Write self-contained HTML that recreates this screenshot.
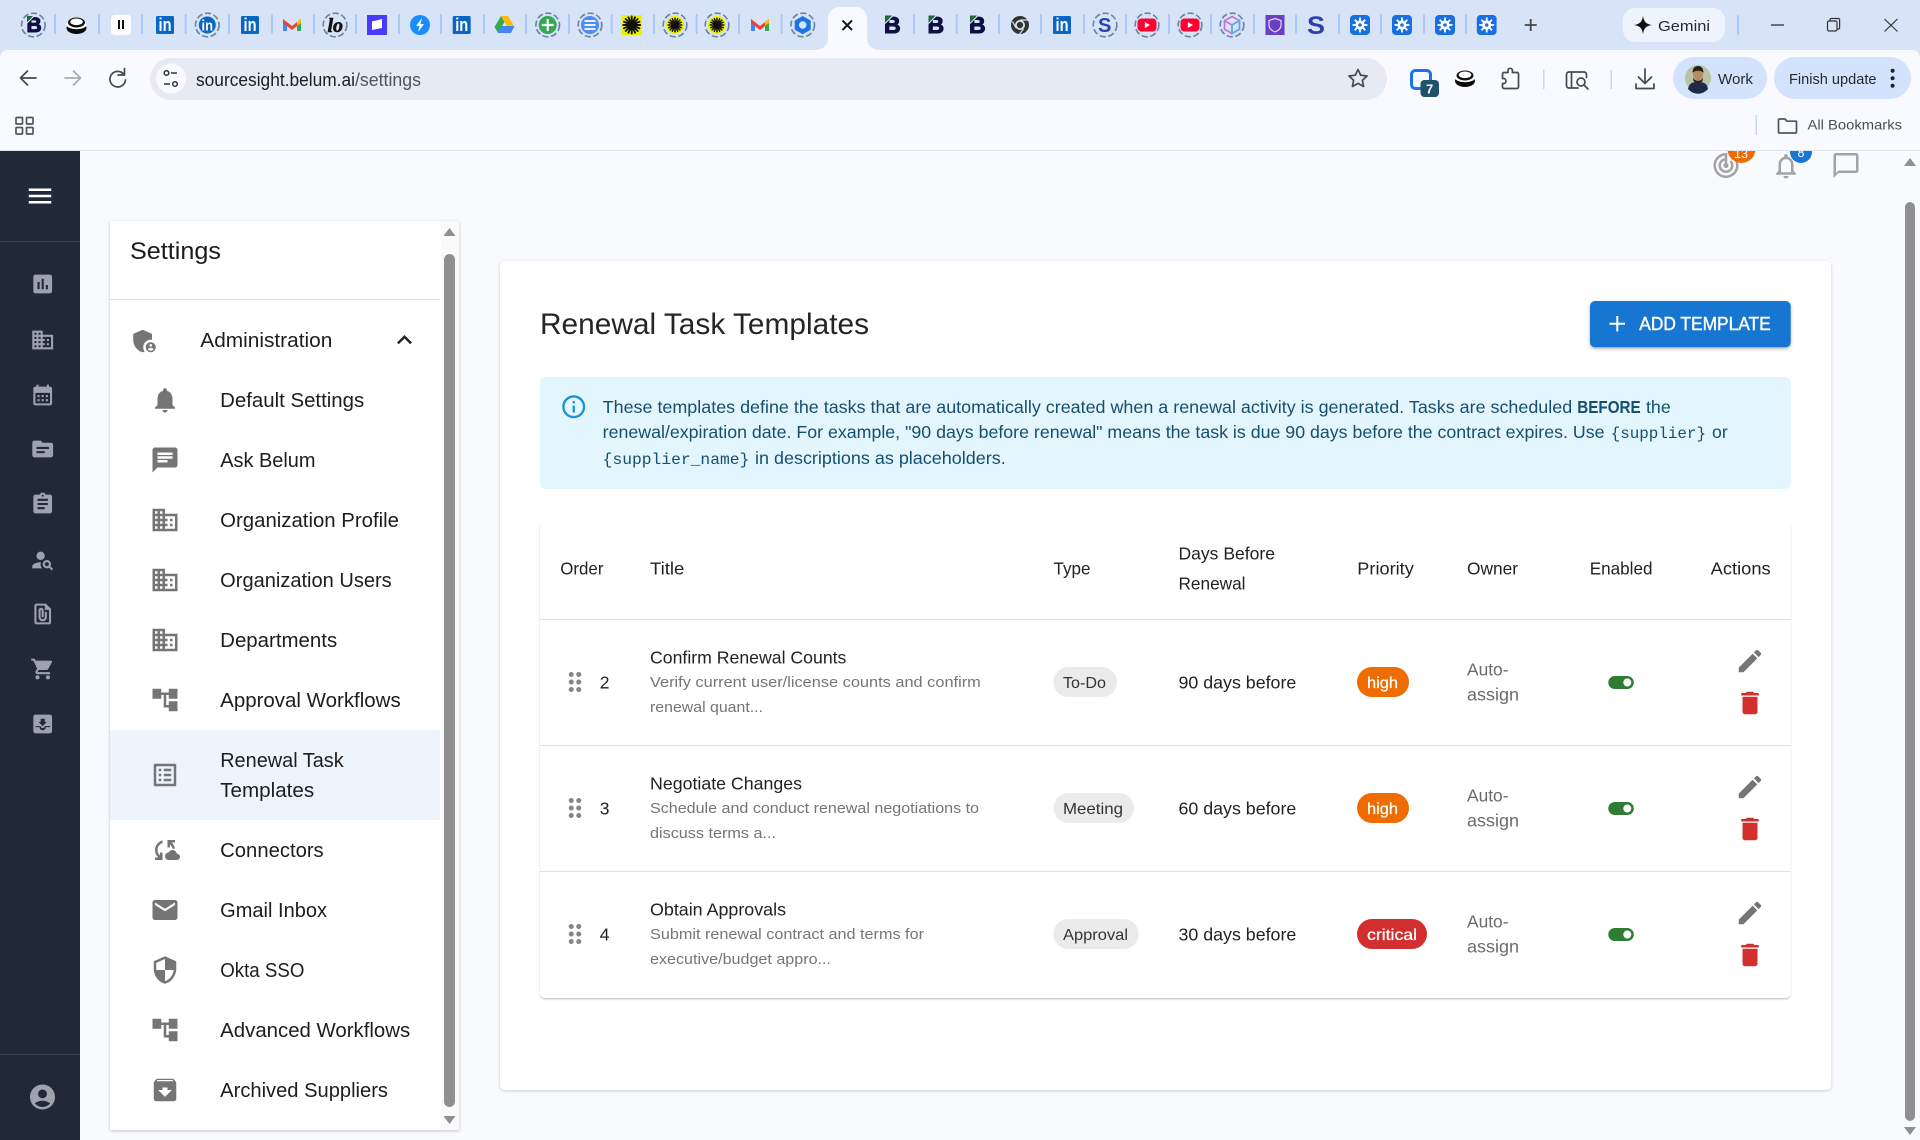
<!DOCTYPE html>
<html lang="en">
<head>
<meta charset="utf-8">
<title>Renewal Task Templates - Settings</title>
<style>
html,body{margin:0;padding:0;width:1920px;height:1140px;overflow:hidden;background:#f9fafe}
svg{display:block}
text{font-family:"Liberation Sans",sans-serif;white-space:pre}
.n{font-size:20px;fill:#1d1d1d}
.th{font-size:17.5px;fill:#222}
.td{font-size:17.5px;fill:#222}
.ds{font-size:15px;fill:#757575}
.ow{font-size:17.5px;fill:#6b6b6b}
.ch{font-size:16px;fill:#333}
.pr{font-size:16px;fill:#fff;stroke:#fff;stroke-width:.25}
.al{font-size:17.5px;fill:#164f6e}
.mo{font-family:"Liberation Mono",monospace;font-size:16px;fill:#164f6e}
.ui{font-size:15px;fill:#26292f}
.ic{fill:#757575}
.si{fill:#9ca3af}
.ln{fill:none;stroke:#444a52;stroke-width:1.7;stroke-linecap:round;stroke-linejoin:round}
.sep{fill:#a8c7fa}
.fb{font-weight:700;font-size:23px;fill:#0e1044;stroke:#0e1044;stroke-width:1.1}
.fi{font-weight:700;font-size:18px;fill:#fff}
</style>
</head>
<body>
<svg xmlns="http://www.w3.org/2000/svg" width="1920" height="1140" viewBox="0 0 1920 1140">
<defs>
<symbol id="menu" viewBox="0 0 24 24"><path d="M3 18h18v-2H3v2zm0-5h18v-2H3v2zm0-7v2h18V6H3z"/></symbol>
<symbol id="assess" viewBox="0 0 24 24"><path d="M19 3H5c-1.1 0-2 .9-2 2v14c0 1.1.9 2 2 2h14c1.1 0 2-.9 2-2V5c0-1.1-.9-2-2-2zM9 17H7v-7h2v7zm4 0h-2V7h2v10zm4 0h-2v-4h2v4z"/></symbol>
<symbol id="domain" viewBox="0 0 24 24"><path d="M12 7V3H2v18h20V7H12zM6 19H4v-2h2v2zm0-4H4v-2h2v2zm0-4H4V9h2v2zm0-4H4V5h2v2zm4 12H8v-2h2v2zm0-4H8v-2h2v2zm0-4H8V9h2v2zm0-4H8V5h2v2zm10 12h-8v-2h2v-2h-2v-2h2v-2h-2V9h8v10zm-2-8h-2v2h2v-2zm0 4h-2v2h2v-2z"/></symbol>
<symbol id="cal" viewBox="0 0 24 24"><path d="M19 4h-1V2h-2v2H8V2H6v2H5c-1.11 0-1.99.9-1.99 2L3 20c0 1.1.89 2 2 2h14c1.1 0 2-.9 2-2V6c0-1.1-.9-2-2-2zm0 16H5V10h14v10zM9 14H7v-2h2v2zm4 0h-2v-2h2v2zm4 0h-2v-2h2v2zm-8 4H7v-2h2v2zm4 0h-2v-2h2v2zm4 0h-2v-2h2v2z"/></symbol>
<symbol id="topic" viewBox="0 0 24 24"><path d="M20 6h-8l-2-2H4c-1.1 0-1.99.9-1.99 2L2 18c0 1.1.9 2 2 2h16c1.1 0 2-.9 2-2V8c0-1.1-.9-2-2-2zm-6 10H6v-2h8v2zm4-4H6v-2h12v2z"/></symbol>
<symbol id="assign" viewBox="0 0 24 24"><path d="M19 3h-4.18C14.4 1.84 13.3 1 12 1c-1.3 0-2.4.84-2.82 2H5c-1.1 0-2 .9-2 2v14c0 1.1.9 2 2 2h14c1.1 0 2-.9 2-2V5c0-1.1-.9-2-2-2zm-7 0c.55 0 1 .45 1 1s-.45 1-1 1-1-.45-1-1 .45-1 1-1zm2 14H7v-2h7v2zm3-4H7v-2h10v2zm0-4H7V7h10v2z"/></symbol>
<symbol id="psearch" viewBox="0 0 24 24"><circle cx="10" cy="8" r="4"/><path d="M10.35 14.01C7.62 13.91 2 15.27 2 18v2h9.54c-2.47-2.76-1.23-5.89-1.19-5.99zm9.08 4.01c.36-.59.57-1.28.57-2.02 0-2.21-1.79-4-4-4s-4 1.79-4 4 1.79 4 4 4c.74 0 1.43-.22 2.02-.57L20.59 22 22 20.59l-2.57-2.57zM16 18c-1.1 0-2-.9-2-2s.9-2 2-2 2 .9 2 2-.9 2-2 2z"/></symbol>
<symbol id="file" viewBox="0 0 24 24"><path d="M15 2H6c-1.1 0-2 .9-2 2v16c0 1.1.9 2 2 2h12c1.1 0 2-.89 2-2V7l-5-5zM6 20V4h8v4h4v12H6zm10-10v5c0 2.21-1.79 4-4 4s-4-1.79-4-4V8.5c0-1.47 1.26-2.64 2.76-2.49C12.06 6.14 13 7.35 13 8.66V15h-2V8.5c0-.28-.22-.5-.5-.5s-.5.22-.5.5V15c0 1.1.9 2 2 2s2-.9 2-2v-5h2z"/></symbol>
<symbol id="cart" viewBox="0 0 24 24"><path d="M7 18c-1.1 0-1.99.9-1.99 2S5.9 22 7 22s2-.9 2-2-.9-2-2-2zM1 2v2h2l3.6 7.59-1.35 2.45c-.16.28-.25.61-.25.96 0 1.1.9 2 2 2h12v-2H7.42c-.14 0-.25-.11-.25-.25l.03-.12.9-1.63h7.45c.75 0 1.41-.41 1.75-1.03l3.58-6.49c.08-.14.12-.31.12-.48 0-.55-.45-1-1-1H5.21l-.94-2H1zm16 16c-1.1 0-1.99.9-1.99 2s.89 2 1.99 2 2-.9 2-2-.9-2-2-2z"/></symbol>
<symbol id="inbox" viewBox="0 0 24 24"><path fill-rule="evenodd" d="M19 3H5c-1.1 0-2 .9-2 2v14c0 1.1.9 2 2 2h14c1.1 0 2-.9 2-2V5c0-1.1-.9-2-2-2zM16 10h-2V7h-4v3H8l4 4 4-4zM5 14v1h4c0 1.66 1.35 3 3 3s3-1.34 3-3h4v-1h-5c0 1.1-.9 2-2 2s-2-.9-2-2H5z"/></symbol>
<symbol id="acct" viewBox="0 0 24 24"><path d="M12 2C6.48 2 2 6.48 2 12s4.48 10 10 10 10-4.48 10-10S17.52 2 12 2zm0 4c1.93 0 3.5 1.57 3.5 3.5S13.93 13 12 13s-3.5-1.57-3.5-3.5S10.07 6 12 6zm0 14c-2.03 0-4.43-.82-6.14-2.88C7.55 15.8 9.68 15 12 15s4.45.8 6.14 2.12C16.43 19.18 14.03 20 12 20z"/></symbol>
<symbol id="bell" viewBox="0 0 24 24"><path d="M12 22c1.1 0 2-.9 2-2h-4c0 1.1.89 2 2 2zm6-6v-5c0-3.07-1.64-5.64-4.5-6.32V4c0-.83-.67-1.5-1.5-1.5s-1.5.67-1.5 1.5v.68C7.63 5.36 6 7.92 6 11v5l-2 2v1h16v-1l-2-2z"/></symbol>
<symbol id="chat" viewBox="0 0 24 24"><path d="M20 2H4c-1.1 0-1.99.9-1.99 2L2 22l4-4h14c1.1 0 2-.9 2-2V4c0-1.1-.9-2-2-2zM6 9h12v2H6V9zm8 5H6v-2h8v2zm4-6H6V6h12v2z"/></symbol>
<symbol id="tree" viewBox="0 0 24 24"><path d="M22 11V3h-7v3H9V3H2v8h7V8h2v10h4v3h7v-8h-7v3h-2V8h2v3z"/></symbol>
<symbol id="list" viewBox="0 0 24 24"><path d="M19 5v14H5V5h14m1.1-2H3.9c-.5 0-.9.4-.9.9v16.2c0 .4.4.9.9.9h16.2c.4 0 .9-.5.9-.9V3.9c0-.5-.5-.9-.9-.9zM11 7h6v2h-6V7zm0 4h6v2h-6v-2zm0 4h6v2h-6zM7 7h2v2H7zm0 4h2v2H7zm0 4h2v2H7z"/></symbol>
<symbol id="mail" viewBox="0 0 24 24"><path d="M20 4H4c-1.1 0-1.99.9-1.99 2L2 18c0 1.1.9 2 2 2h16c1.1 0 2-.9 2-2V6c0-1.1-.9-2-2-2zm0 4l-8 5-8-5V6l8 5 8-5v2z"/></symbol>
<symbol id="sec" viewBox="0 0 24 24"><path d="M12 1L3 5v6c0 5.55 3.84 10.74 9 12 5.16-1.26 9-6.45 9-12V5l-9-4zm0 10.99h7c-.53 4.12-3.28 7.79-7 8.94V12H5V6.3l7-3.11v8.8z"/></symbol>
<symbol id="arch" viewBox="0 0 24 24"><path d="M20.54 5.23l-1.39-1.68C18.88 3.21 18.47 3 18 3H6c-.47 0-.88.21-1.16.55L3.46 5.23C3.17 5.57 3 6.02 3 6.5V19c0 1.1.9 2 2 2h14c1.1 0 2-.9 2-2V6.5c0-.48-.17-.93-.46-1.27zM12 17.5L6.5 12H10v-2h4v2h3.5L12 17.5zM5.12 5l.81-1h12l.94 1H5.12z"/></symbol>
<symbol id="csync" viewBox="0 0 24 24"><path d="M21.5 14.98c-.02 0-.03 0-.05.01C21.2 13.3 19.76 12 18 12c-1.4 0-2.6.83-3.16 2.02C13.26 14.1 12 15.4 12 17c0 1.66 1.34 3 3 3l6.5-.02c1.38 0 2.5-1.12 2.5-2.5s-1.12-2.5-2.5-2.5zM10 4.26v2.09C7.67 7.18 6 9.39 6 12c0 1.77.78 3.34 2 4.44V14h2v6H4v-2h2.73C5.06 16.54 4 14.4 4 12c0-3.73 2.55-6.85 6-7.74zM20 6h-2.73c1.43 1.26 2.41 3.01 2.66 5h-2.02c-.23-1.36-.93-2.55-1.91-3.44V10h-2V4h6v2z"/></symbol>
<symbol id="admin" viewBox="0 0 24 24"><path d="M17 11c.34 0 .67.04 1 .09V6.27L10.5 3 3 6.27v4.91c0 4.54 3.2 8.79 7.5 9.82.55-.13 1.08-.32 1.6-.55-.69-.98-1.1-2.17-1.1-3.45 0-3.31 2.69-6 6-6zM17 13c-2.21 0-4 1.79-4 4s1.79 4 4 4 4-1.79 4-4-1.79-4-4-4zm0 1.38c.62 0 1.12.51 1.12 1.12s-.51 1.12-1.12 1.12-1.12-.51-1.12-1.12.5-1.12 1.12-1.12zm0 5.37c-.93 0-1.74-.46-2.24-1.17.05-.72 1.51-1.08 2.24-1.08s2.19.36 2.24 1.08c-.5.71-1.31 1.17-2.24 1.17z"/></symbol>
<symbol id="less" viewBox="0 0 24 24"><path d="M12 8l-6 6 1.41 1.41L12 10.83l4.59 4.58L18 14z"/></symbol>
<symbol id="edit" viewBox="0 0 24 24"><path d="M3 17.25V21h3.75L17.81 9.94l-3.75-3.75L3 17.25zM20.71 7.04c.39-.39.39-1.02 0-1.41l-2.34-2.34c-.39-.39-1.02-.39-1.41 0l-1.83 1.83 3.75 3.75 1.83-1.83z"/></symbol>
<symbol id="del" viewBox="0 0 24 24"><path d="M6 19c0 1.1.9 2 2 2h8c1.1 0 2-.9 2-2V7H6v12zM19 4h-3.5l-1-1h-5l-1 1H5v2h14V4z"/></symbol>
<symbol id="drag" viewBox="0 0 24 24"><path d="M11 18c0 1.1-.9 2-2 2s-2-.9-2-2 .9-2 2-2 2 .9 2 2zm-2-8c-1.1 0-2 .9-2 2s.9 2 2 2 2-.9 2-2-.9-2-2-2zm0-6c-1.1 0-2 .9-2 2s.9 2 2 2 2-.9 2-2-.9-2-2-2zm6 4c1.1 0 2-.9 2-2s-.9-2-2-2-2 .9-2 2 .9 2 2 2zm0 2c-1.1 0-2 .9-2 2s.9 2 2 2 2-.9 2-2-.9-2-2-2zm0 6c-1.1 0-2 .9-2 2s.9 2 2 2 2-.9 2-2-.9-2-2-2z"/></symbol>
<symbol id="info" viewBox="0 0 24 24"><path d="M11 7h2v2h-2zm0 4h2v6h-2zm1-9C6.48 2 2 6.48 2 12s4.48 10 10 10 10-4.48 10-10S17.52 2 12 2zm0 18c-4.41 0-8-3.59-8-8s3.59-8 8-8 8 3.59 8 8-3.59 8-8 8z"/></symbol>
<symbol id="nbell" viewBox="0 0 24 24"><path d="M12 22c1.1 0 2-.9 2-2h-4c0 1.1.9 2 2 2zm6-6v-5c0-3.07-1.63-5.64-4.5-6.32V4c0-.83-.67-1.5-1.5-1.5s-1.5.67-1.5 1.5v.68C7.64 5.36 6 7.92 6 11v5l-2 2v1h16v-1l-2-2zm-2 1H8v-6c0-2.48 1.51-4.5 4-4.5s4 2.02 4 4.5v6z"/></symbol>
<symbol id="bubble" viewBox="0 0 24 24"><path d="M20 2H4c-1.1 0-2 .9-2 2v18l4-4h14c1.1 0 2-.9 2-2V4c0-1.1-.9-2-2-2zm0 14H6l-2 2V4h16v12z"/></symbol>
<symbol id="track" viewBox="0 0 24 24"><path d="M19.07 4.93l-1.41 1.41C19.1 7.79 20 9.79 20 12c0 4.42-3.58 8-8 8s-8-3.58-8-8c0-4.08 3.05-7.44 7-7.93v2.02C8.16 6.57 6 9.03 6 12c0 3.31 2.69 6 6 6s6-2.69 6-6c0-1.66-.67-3.16-1.76-4.24l-1.41 1.41C15.55 9.9 16 10.9 16 12c0 2.21-1.79 4-4 4s-4-1.79-4-4c0-1.86 1.28-3.41 3-3.86v2.14c-.6.35-1 .98-1 1.72 0 1.1.9 2 2 2s2-.9 2-2c0-.74-.4-1.38-1-1.72V2h-1C6.48 2 2 6.48 2 12s4.48 10 10 10 10-4.48 10-10c0-2.76-1.12-5.26-2.93-7.07z"/></symbol>
<!-- favicon shapes (no text) -->
<symbol id="ring" viewBox="-13 -13 26 26" overflow="visible"><circle r="11.8" fill="none" stroke="#6a84a6" stroke-width="1.6" stroke-dasharray="6.2 2.6"/></symbol>
<symbol id="gm" viewBox="-10 -10 20 20"><path d="M-9 -5v11h4V-2z" fill="#4285f4"/><path d="M9 -5v11H5V-2z" fill="#34a853"/><path d="M-9 -6L0 1 9 -6 9 -2 0 5 -9 -2z" fill="#ea4335"/><path d="M5 -3L9 -6.5V-2L5 1z" fill="#fbbc04"/></symbol>
<symbol id="star8" viewBox="-10 -10 20 20"><g stroke="#111" stroke-width="1.900" stroke-linecap="round"><path d="M0-8.500V8.500M-8.500 0H8.500M-6-6L6 6M-6 6L6-6M-3.300-7.700L3.300 7.700M3.300-7.700L-3.300 7.700M-7.700-3.300L7.700 3.300M-7.700 3.300L7.700-3.300"/></g></symbol>
<symbol id="snow" viewBox="-10 -10 20 20"><rect x="-10" y="-10" width="20" height="20" rx="4" fill="#1a6fe0"/><circle r="4.6" fill="#fff"/><g stroke="#fff" stroke-width="1.800"><path d="M0-7.500V7.500M-7.500 0H7.500M-5.300-5.300L5.300 5.300M-5.300 5.300L5.300-5.300"/></g><circle r="1.800" fill="#1a6fe0"/></symbol>
<symbol id="yt" viewBox="-10 -10 20 20"><rect x="-9.500" y="-6.500" width="19" height="13" rx="4" fill="#ff0033"/><path d="M-2.200-3L3 0l-5.200 3z" fill="#fff"/></symbol>
<symbol id="disc" viewBox="-11 -10 22 20"><ellipse cx="0" cy="3" rx="10" ry="6" fill="#0a0a0a"/><ellipse cx="0" cy="0" rx="9.800" ry="4.200" fill="#fff"/><ellipse cx="0" cy="-2.500" rx="8.500" ry="5" fill="#111"/><ellipse cx="0" cy="-3.200" rx="6.300" ry="3.300" fill="#fff"/></symbol>
<filter id="s1" x="-5%" y="-5%" width="110%" height="110%"><feDropShadow dx="0" dy="1" stdDeviation="1.500" flood-color="#000" flood-opacity=".22"/></filter>
<filter id="s2" x="-5%" y="-5%" width="110%" height="110%"><feDropShadow dx="0" dy="1" stdDeviation="1.600" flood-color="#000" flood-opacity=".18"/></filter>
<filter id="s3" x="-5%" y="-10%" width="110%" height="130%"><feDropShadow dx="0" dy="1.500" stdDeviation="1.500" flood-color="#000" flood-opacity=".3"/></filter>
<filter id="s4" x="-2%" y="-2%" width="104%" height="104%"><feDropShadow dx="0" dy="1.500" stdDeviation=".9" flood-color="#000" flood-opacity=".2"/></filter>
</defs>

<rect width="1920" height="1140" fill="#f9fafe"/>

<!-- top-right app icons -->
<g fill="#a3a3a3">
<use href="#track" x="1711" y="150.500" width="30" height="30"/>
<use href="#nbell" x="1771" y="151" width="30" height="30"/>
<use href="#bubble" x="1831" y="150.500" width="30" height="30"/>
</g>
<circle cx="1741.500" cy="149" r="14" fill="#ef6c00"/>
<text x="1734" y="158" font-size="12.500" fill="#fff">13</text>
<circle cx="1801" cy="152" r="11" fill="#1976d2"/>
<text x="1797.500" y="157" font-size="12.500" fill="#fff">8</text>

<!-- sidebar -->
<rect x="0" y="150" width="80" height="990" fill="#1f2937"/>
<rect x="0" y="241" width="80" height="1" fill="#3a4452"/>
<rect x="0" y="1054" width="80" height="1" fill="#3a4452"/>
<use href="#menu" x="25" y="181" width="30" height="30" fill="#fff"/>
<g class="si">
<use href="#assess" x="30.200" y="271.500" width="25" height="25"/>
<use href="#domain" x="30.200" y="327.500" width="25" height="25"/>
<use href="#cal" x="30.200" y="382.500" width="25" height="25"/>
<use href="#topic" x="30.200" y="436.500" width="25" height="25"/>
<use href="#assign" x="30.200" y="491.500" width="25" height="25"/>
<use href="#psearch" x="30.200" y="547.500" width="25" height="25"/>
<use href="#file" x="30.200" y="601.500" width="25" height="25"/>
<use href="#cart" x="30.200" y="656.500" width="25" height="25"/>
<use href="#inbox" x="30.200" y="711.500" width="25" height="25"/>
<use href="#acct" x="27.500" y="1082" width="30" height="30"/>
</g>

<!-- settings panel -->
<rect x="110" y="221" width="349" height="909" fill="#fff" filter="url(#s1)"/>
<rect x="441" y="221" width="18" height="909" fill="#fafafa"/>
<text x="130" y="259" font-size="24" fill="#1c1c1c" textLength="91" lengthAdjust="spacingAndGlyphs">Settings</text>
<rect x="110" y="299" width="330" height="1" fill="#e0e0e0"/>
<rect x="110" y="730" width="330" height="90" fill="#edf4fc"/>
<use href="#admin" x="129.500" y="326" width="30" height="30" class="ic"/>
<text class="n" x="200.300" y="347" textLength="132" lengthAdjust="spacingAndGlyphs">Administration</text>
<use href="#less" x="389.500" y="325" width="30" height="30" fill="#222"/>
<g class="ic">
<use href="#bell" x="150" y="385" width="30" height="30"/>
<use href="#chat" x="150" y="445" width="30" height="30"/>
<use href="#domain" x="150" y="505" width="30" height="30"/>
<use href="#domain" x="150" y="565" width="30" height="30"/>
<use href="#domain" x="150" y="625" width="30" height="30"/>
<use href="#tree" x="150" y="685" width="30" height="30"/>
<use href="#list" x="150" y="760" width="30" height="30"/>
<use href="#csync" x="150" y="835" width="30" height="30"/>
<use href="#mail" x="150" y="895" width="30" height="30"/>
<use href="#sec" x="150" y="955" width="30" height="30"/>
<use href="#tree" x="150" y="1015" width="30" height="30"/>
<use href="#arch" x="150" y="1075" width="30" height="30"/>
</g>
<text class="n" x="220.200" y="407" textLength="144" lengthAdjust="spacingAndGlyphs">Default Settings</text>
<text class="n" x="220.200" y="467" textLength="95.300" lengthAdjust="spacingAndGlyphs">Ask Belum</text>
<text class="n" x="220.200" y="527" textLength="178.800" lengthAdjust="spacingAndGlyphs">Organization Profile</text>
<text class="n" x="220.200" y="587" textLength="171.500" lengthAdjust="spacingAndGlyphs">Organization Users</text>
<text class="n" x="220.200" y="647" textLength="117" lengthAdjust="spacingAndGlyphs">Departments</text>
<text class="n" x="220.200" y="707" textLength="180.500" lengthAdjust="spacingAndGlyphs">Approval Workflows</text>
<text class="n" x="220.200" y="767" textLength="123.500" lengthAdjust="spacingAndGlyphs">Renewal Task</text>
<text class="n" x="220.200" y="797" textLength="94" lengthAdjust="spacingAndGlyphs">Templates</text>
<text class="n" x="220.200" y="857" textLength="103.500" lengthAdjust="spacingAndGlyphs">Connectors</text>
<text class="n" x="220.200" y="917" textLength="106.800" lengthAdjust="spacingAndGlyphs">Gmail Inbox</text>
<text class="n" x="220.200" y="977" textLength="84.200" lengthAdjust="spacingAndGlyphs">Okta SSO</text>
<text class="n" x="220.200" y="1037" textLength="190" lengthAdjust="spacingAndGlyphs">Advanced Workflows</text>
<text class="n" x="220.200" y="1097" textLength="167.800" lengthAdjust="spacingAndGlyphs">Archived Suppliers</text>
<path d="M443.500 236l6-8 6 8z" fill="#8f8f8f"/>
<rect x="444" y="254" width="11" height="853" rx="5.500" fill="#8f8f8f"/>
<path d="M443.500 1116l6 8 6-8z" fill="#8f8f8f"/>

<!-- main card -->
<rect x="500" y="261" width="1331" height="829" rx="5" fill="#fff" filter="url(#s2)"/>
<text x="540" y="334" font-size="30" fill="#252525" textLength="329" lengthAdjust="spacingAndGlyphs">Renewal Task Templates</text>
<rect x="1590" y="301" width="200.700" height="46.300" rx="5" fill="#1976d2" filter="url(#s3)"/>
<path d="M1617.300 316v15.500M1609.500 323.700h15.500" stroke="#fff" stroke-width="2" fill="none"/>
<text x="1639.300" y="330" font-size="18" fill="#fff" stroke="#fff" stroke-width=".4" textLength="131.400" lengthAdjust="spacingAndGlyphs">ADD TEMPLATE</text>

<!-- alert -->
<rect x="540" y="377" width="1250.700" height="112" rx="5" fill="#e3f5fd"/>
<use href="#info" x="560" y="393" width="27.500" height="27.500" fill="#1b92d6"/>
<text class="al" x="602.700" y="412.800" textLength="969.500" lengthAdjust="spacingAndGlyphs">These templates define the tasks that are automatically created when a renewal activity is generated. Tasks are scheduled</text>
<text class="al" x="1577.300" y="412.800" font-weight="700" textLength="63.400" lengthAdjust="spacingAndGlyphs">BEFORE</text>
<text class="al" x="1646" y="412.800" textLength="24.700" lengthAdjust="spacingAndGlyphs">the</text>
<text class="al" x="602.700" y="438" textLength="1001.800" lengthAdjust="spacingAndGlyphs">renewal/expiration date. For example, "90 days before renewal" means the task is due 90 days before the contract expires. Use</text>
<text class="mo" x="1610.700" y="438" textLength="95.300" lengthAdjust="spacingAndGlyphs">{supplier}</text>
<text class="al" x="1712" y="438" textLength="15.700" lengthAdjust="spacingAndGlyphs">or</text>
<text class="mo" x="602.700" y="463.800" textLength="146.600" lengthAdjust="spacingAndGlyphs">{supplier_name}</text>
<text class="al" x="755" y="463.800" textLength="250.700" lengthAdjust="spacingAndGlyphs">in descriptions as placeholders.</text>

<!-- table -->
<rect x="540" y="519" width="1250.700" height="479" rx="5" fill="#fff" filter="url(#s4)"/>
<text class="th" x="560.200" y="574.500" textLength="43.300" lengthAdjust="spacingAndGlyphs">Order</text>
<text class="th" x="650" y="574.500" textLength="34.400" lengthAdjust="spacingAndGlyphs">Title</text>
<text class="th" x="1053.500" y="574.500" textLength="37" lengthAdjust="spacingAndGlyphs">Type</text>
<text class="th" x="1178.500" y="559.500" textLength="96.500" lengthAdjust="spacingAndGlyphs">Days Before</text>
<text class="th" x="1178.500" y="589.500" textLength="67" lengthAdjust="spacingAndGlyphs">Renewal</text>
<text class="th" x="1357.300" y="574.500" textLength="56.500" lengthAdjust="spacingAndGlyphs">Priority</text>
<text class="th" x="1467" y="574.500" textLength="51" lengthAdjust="spacingAndGlyphs">Owner</text>
<text class="th" x="1589.700" y="574.500" textLength="62.800" lengthAdjust="spacingAndGlyphs">Enabled</text>
<text class="th" x="1710.700" y="574.500" textLength="60" lengthAdjust="spacingAndGlyphs">Actions</text>
<rect x="540" y="619" width="1250.700" height="1" fill="#e0e0e0"/>
<rect x="540" y="745" width="1250.700" height="1" fill="#e0e0e0"/>
<rect x="540" y="871" width="1250.700" height="1" fill="#e0e0e0"/>

<!-- row 1 -->
<use href="#drag" x="560" y="667" width="30" height="30" fill="#858585"/>
<text class="td" x="599.700" y="688.700">2</text>
<text class="td" x="650" y="663.700" textLength="196.400" lengthAdjust="spacingAndGlyphs">Confirm Renewal Counts</text>
<text class="ds" x="650" y="687" textLength="330.800" lengthAdjust="spacingAndGlyphs">Verify current user/license counts and confirm</text>
<text class="ds" x="650" y="712" textLength="113" lengthAdjust="spacingAndGlyphs">renewal quant...</text>
<rect x="1053.500" y="667" width="63.500" height="30" rx="15" fill="#ebebeb"/>
<text class="ch" x="1063" y="688" textLength="43" lengthAdjust="spacingAndGlyphs">To-Do</text>
<text class="td" x="1178.500" y="688.700" textLength="117.800" lengthAdjust="spacingAndGlyphs">90 days before</text>
<rect x="1357" y="667" width="52" height="30" rx="15" fill="#ef6c00"/>
<text class="pr" x="1367" y="688" textLength="31" lengthAdjust="spacingAndGlyphs">high</text>
<text class="ow" x="1467" y="675.700" textLength="41.500" lengthAdjust="spacingAndGlyphs">Auto-</text>
<text class="ow" x="1467" y="700.700" textLength="52" lengthAdjust="spacingAndGlyphs">assign</text>
<rect x="1608.300" y="676" width="25.500" height="13" rx="6.500" fill="#2e7d32"/>
<circle cx="1627.300" cy="682.500" r="4" fill="#fff"/>
<use href="#edit" x="1735" y="646" width="30" height="30" fill="#757575"/>
<use href="#del" x="1735" y="688" width="30" height="30" fill="#d32f2f"/>

<!-- row 2 -->
<use href="#drag" x="560" y="793" width="30" height="30" fill="#858585"/>
<text class="td" x="599.700" y="814.700">3</text>
<text class="td" x="650" y="789.700" textLength="152" lengthAdjust="spacingAndGlyphs">Negotiate Changes</text>
<text class="ds" x="650" y="813" textLength="329" lengthAdjust="spacingAndGlyphs">Schedule and conduct renewal negotiations to</text>
<text class="ds" x="650" y="838" textLength="126" lengthAdjust="spacingAndGlyphs">discuss terms a...</text>
<rect x="1053.500" y="793" width="80.500" height="30" rx="15" fill="#ebebeb"/>
<text class="ch" x="1063" y="814" textLength="60" lengthAdjust="spacingAndGlyphs">Meeting</text>
<text class="td" x="1178.500" y="814.700" textLength="117.800" lengthAdjust="spacingAndGlyphs">60 days before</text>
<rect x="1357" y="793" width="52" height="30" rx="15" fill="#ef6c00"/>
<text class="pr" x="1367" y="814" textLength="31" lengthAdjust="spacingAndGlyphs">high</text>
<text class="ow" x="1467" y="801.700" textLength="41.500" lengthAdjust="spacingAndGlyphs">Auto-</text>
<text class="ow" x="1467" y="826.700" textLength="52" lengthAdjust="spacingAndGlyphs">assign</text>
<rect x="1608.300" y="802" width="25.500" height="13" rx="6.500" fill="#2e7d32"/>
<circle cx="1627.300" cy="808.500" r="4" fill="#fff"/>
<use href="#edit" x="1735" y="772" width="30" height="30" fill="#757575"/>
<use href="#del" x="1735" y="814" width="30" height="30" fill="#d32f2f"/>

<!-- row 3 -->
<use href="#drag" x="560" y="919" width="30" height="30" fill="#858585"/>
<text class="td" x="599.700" y="940.700">4</text>
<text class="td" x="650" y="915.700" textLength="136" lengthAdjust="spacingAndGlyphs">Obtain Approvals</text>
<text class="ds" x="650" y="939" textLength="274" lengthAdjust="spacingAndGlyphs">Submit renewal contract and terms for</text>
<text class="ds" x="650" y="964" textLength="181" lengthAdjust="spacingAndGlyphs">executive/budget appro...</text>
<rect x="1053.500" y="919" width="85" height="30" rx="15" fill="#ebebeb"/>
<text class="ch" x="1063" y="940" textLength="65" lengthAdjust="spacingAndGlyphs">Approval</text>
<text class="td" x="1178.500" y="940.700" textLength="117.800" lengthAdjust="spacingAndGlyphs">30 days before</text>
<rect x="1357" y="919" width="70" height="30" rx="15" fill="#d32f2f"/>
<text class="pr" x="1367" y="940" textLength="50" lengthAdjust="spacingAndGlyphs">critical</text>
<text class="ow" x="1467" y="927.700" textLength="41.500" lengthAdjust="spacingAndGlyphs">Auto-</text>
<text class="ow" x="1467" y="952.700" textLength="52" lengthAdjust="spacingAndGlyphs">assign</text>
<rect x="1608.300" y="928" width="25.500" height="13" rx="6.500" fill="#2e7d32"/>
<circle cx="1627.300" cy="934.500" r="4" fill="#fff"/>
<use href="#edit" x="1735" y="898" width="30" height="30" fill="#757575"/>
<use href="#del" x="1735" y="940" width="30" height="30" fill="#d32f2f"/>

<!-- page scrollbar -->
<path d="M1904 166l6-8 6 8z" fill="#8f8f8f"/>
<rect x="1905" y="202" width="10" height="919" rx="5" fill="#8f8f8f"/>
<path d="M1904 1127l6 8 6-8z" fill="#8f8f8f"/>

<!-- browser chrome -->
<rect x="0" y="0" width="1920" height="50" fill="#d7e3f6"/>
<rect x="0" y="50" width="1920" height="100" fill="#f8faff"/>
<path d="M0 58a8 8 0 0 1 8-8H0zM1920 58a8 8 0 0 0-8-8h8z" fill="#d7e3f6"/>
<rect x="0" y="150" width="1920" height="1" fill="#dfe3ec"/>
<path d="M815 50c8 0 13-5 13-12V19c0-7 5-12 12-12h16c7 0 11 5 11 12v19c0 7 5 12 13 12z" fill="#f8faff"/>

<!-- tab separators -->
<g class="sep">
<rect x="54" y="14" width="2" height="20" rx="1"/><rect x="98" y="14" width="2" height="20" rx="1"/><rect x="141" y="14" width="2" height="20" rx="1"/><rect x="184.700" y="14" width="2" height="20" rx="1"/><rect x="228" y="14" width="2" height="20" rx="1"/><rect x="271" y="14" width="2" height="20" rx="1"/><rect x="313" y="14" width="2" height="20" rx="1"/><rect x="355" y="14" width="2" height="20" rx="1"/><rect x="398" y="14" width="2" height="20" rx="1"/><rect x="440" y="14" width="2" height="20" rx="1"/><rect x="483" y="14" width="2" height="20" rx="1"/><rect x="525" y="14" width="2" height="20" rx="1"/><rect x="568" y="14" width="2" height="20" rx="1"/><rect x="610.700" y="14" width="2" height="20" rx="1"/><rect x="653" y="14" width="2" height="20" rx="1"/><rect x="695.700" y="14" width="2" height="20" rx="1"/><rect x="738" y="14" width="2" height="20" rx="1"/><rect x="780.700" y="14" width="2" height="20" rx="1"/><rect x="913" y="14" width="2" height="20" rx="1"/><rect x="955.700" y="14" width="2" height="20" rx="1"/><rect x="998" y="14" width="2" height="20" rx="1"/><rect x="1040" y="14" width="2" height="20" rx="1"/><rect x="1083" y="14" width="2" height="20" rx="1"/><rect x="1125" y="14" width="2" height="20" rx="1"/><rect x="1168" y="14" width="2" height="20" rx="1"/><rect x="1210" y="14" width="2" height="20" rx="1"/><rect x="1253" y="14" width="2" height="20" rx="1"/><rect x="1295" y="14" width="2" height="20" rx="1"/><rect x="1338" y="14" width="2" height="20" rx="1"/><rect x="1380" y="14" width="2" height="20" rx="1"/><rect x="1423" y="14" width="2" height="20" rx="1"/><rect x="1465" y="14" width="2" height="20" rx="1"/><rect x="1737" y="15" width="2" height="20" rx="1"/>
</g>

<!-- favicons -->
<use href="#ring" x="20.300" y="12" width="26" height="26"/>
<text class="fb" x="26.500" y="32" style="font-size:21px">B</text>
<path d="M27 16h6l-6 6z" fill="#1b6b3a"/><path d="M27 23l7-7" stroke="#d7e3f6" stroke-width="1.200"/>
<use href="#disc" x="65.500" y="15" width="22" height="20"/>
<rect x="111" y="15" width="20" height="20" rx="3.500" fill="#fff"/><rect x="118" y="20" width="2" height="9" fill="#111"/><rect x="122" y="20" width="2" height="9" fill="#111"/>
<rect x="156" y="16" width="18" height="18" rx="1.500" fill="#0a66c2"/><text class="fi" x="158.500" y="31" textLength="13" lengthAdjust="spacingAndGlyphs">in</text>
<use href="#ring" x="194.300" y="12" width="26" height="26"/>
<circle cx="207.300" cy="25" r="8.500" fill="#0a66c2"/><text x="201.500" y="30.500" font-size="14.500" font-weight="700" fill="#fff" textLength="11.500" lengthAdjust="spacingAndGlyphs">in</text>
<rect x="241" y="16" width="18" height="18" rx="1.500" fill="#0a66c2"/><text class="fi" x="243.500" y="31" textLength="13" lengthAdjust="spacingAndGlyphs">in</text>
<use href="#gm" x="282" y="15" width="20" height="20"/>
<use href="#ring" x="322" y="12" width="26" height="26"/>
<text x="327.500" y="32" font-size="20" font-style="italic" font-weight="700" fill="#111" stroke="#111" stroke-width=".6" style="font-family:'Liberation Serif',serif">lo</text>
<rect x="367" y="15" width="20" height="20" fill="#4b3bff"/><path d="M372 21.500l10-2.500v9l-10 2z" fill="#fff"/>
<circle cx="420" cy="25" r="10" fill="#1a8cff"/><path d="M422 18l-6 8h3.500l-1.500 6 6-8h-3.500z" fill="#fff"/>
<rect x="452.700" y="16" width="18" height="18" rx="1.500" fill="#0a66c2"/><text class="fi" x="455.200" y="31" textLength="13" lengthAdjust="spacingAndGlyphs">in</text>
<path d="M501 16h7l6 10h-7z" fill="#fbbc04"/><path d="M501 16l-6.500 11 3.500 6 6.500-11z" fill="#34a853"/><path d="M498 33h13l3.500-7H501.500z" fill="#4285f4"/>
<use href="#ring" x="534.700" y="12" width="26" height="26"/>
<circle cx="547.700" cy="25" r="9" fill="#34a853"/><path d="M547.700 19v12M541.700 25h12" stroke="#fff" stroke-width="2.200"/>
<use href="#ring" x="577" y="12" width="26" height="26"/>
<circle cx="590" cy="25" r="9" fill="#4f8df5"/><path d="M584.500 21h11M584.500 25h11M584.500 29h11" stroke="#fff" stroke-width="1.800"/>
<rect x="621.700" y="15" width="20" height="20" fill="#ecf000"/><use href="#star8" x="621.700" y="15" width="20" height="20"/>
<use href="#ring" x="662" y="12" width="26" height="26"/>
<circle cx="675" cy="25" r="9" fill="#ecf000"/><use href="#star8" x="667" y="17" width="16" height="16"/>
<use href="#ring" x="704" y="12" width="26" height="26"/>
<circle cx="717" cy="25" r="9" fill="#ecf000"/><use href="#star8" x="709" y="17" width="16" height="16"/>
<use href="#gm" x="750" y="15" width="20" height="20"/>
<use href="#ring" x="789.700" y="12" width="26" height="26"/>
<path d="M802.700 16l8 4.600v9l-8 4.600-8-4.600v-9z" fill="#1a73e8"/><circle cx="802.700" cy="25" r="3.800" fill="#d7e3f6"/>
<path d="M842.500 20.500l9.500 9.500M852 20.500l-9.500 9.500" stroke="#1a1a1a" stroke-width="2" fill="none"/>
<text class="fb" x="884" y="33">B</text><path d="M885 15.500h7l-7 7z" fill="#1b6b3a"/><path d="M885 23.500l8-8" stroke="#d7e3f6" stroke-width="1.200"/>
<text class="fb" x="927.500" y="33">B</text><path d="M928.500 15.500h7l-7 7z" fill="#1b6b3a"/><path d="M928.500 23.500l8-8" stroke="#d7e3f6" stroke-width="1.200"/>
<text class="fb" x="969" y="33">B</text><path d="M970 15.500h7l-7 7z" fill="#1b6b3a"/><path d="M970 23.500l8-8" stroke="#d7e3f6" stroke-width="1.200"/>
<circle cx="1020" cy="25" r="9" fill="#333"/><circle cx="1020" cy="25" r="5" fill="#d7e3f6"/><circle cx="1020" cy="25" r="3.200" fill="#333"/><path d="M1020 20h8M1016 28l-3.500-6.500M1023.500 29l-4 5" stroke="#d7e3f6" stroke-width="1.200"/>
<rect x="1053" y="16" width="18" height="18" rx="1.500" fill="#0a66c2"/><text class="fi" x="1055.500" y="31" textLength="13" lengthAdjust="spacingAndGlyphs">in</text>
<use href="#ring" x="1092" y="12" width="26" height="26"/>
<text x="1098" y="32" font-size="20" font-weight="700" fill="#2e3fb5">S</text>
<use href="#ring" x="1134" y="12" width="26" height="26"/>
<use href="#yt" x="1137" y="15" width="20" height="20"/>
<use href="#ring" x="1177" y="12" width="26" height="26"/>
<use href="#yt" x="1180" y="15" width="20" height="20"/>
<use href="#ring" x="1219" y="12" width="26" height="26"/>
<path d="M1232 16.500l7.500 4.200v8.600l-7.500 4.200-7.500-4.200v-8.600zM1224.500 20.700l7.500 4.300 7.500-4.300M1232 25v8.500" fill="none" stroke="#c46fd8" stroke-width="1.600"/><path d="M1232 25l7.500-4.300v8.600L1232 33.500z" fill="none" stroke="#5aa8ea" stroke-width="1.600"/>
<rect x="1265.500" y="15" width="19" height="20" fill="#6a3fc4"/><path d="M1275 18.500l6 2v5c0 3-2.500 5-6 6.500-3.500-1.500-6-3.500-6-6.500v-5z" fill="none" stroke="#e6dcff" stroke-width="1.200"/>
<text x="1307" y="34" font-size="25" font-weight="700" fill="#2e3fb5" textLength="18" lengthAdjust="spacingAndGlyphs">S</text>
<use href="#snow" x="1350" y="15" width="20" height="20"/>
<use href="#snow" x="1392" y="15" width="20" height="20"/>
<use href="#snow" x="1435" y="15" width="20" height="20"/>
<use href="#snow" x="1476.700" y="15" width="20" height="20"/>
<path d="M1530.700 19v12M1524.700 25h12" stroke="#444" stroke-width="1.800" fill="none"/>

<!-- gemini + window controls -->
<rect x="1623" y="8" width="102" height="34" rx="12" fill="#eef3fd"/>
<path d="M1643 16c1 6 3 8 9 9-6 1-8 3-9 9-1-6-3-8-9-9 6-1 8-3 9-9z" fill="#111"/>
<text class="ui" x="1658" y="31" textLength="52" lengthAdjust="spacingAndGlyphs">Gemini</text>
<path d="M1771 25h13" stroke="#333" stroke-width="1.300"/>
<rect x="1827.500" y="21" width="9.500" height="10" rx="1.500" fill="none" stroke="#333" stroke-width="1.200"/>
<path d="M1830 21v-1.200a1.300 1.300 0 0 1 1.300-1.300h7a1.300 1.300 0 0 1 1.300 1.300v8a1.300 1.300 0 0 1-1.300 1.300H1837" fill="none" stroke="#333" stroke-width="1.200"/>
<path d="M1884.500 19l13 12.500M1897.500 19l-13 12.500" stroke="#333" stroke-width="1.200"/>

<!-- toolbar -->
<path class="ln" d="M36 78H21M27.500 71l-7 7 7 7"/>
<path class="ln" d="M65 78h15M73.500 71l7 7-7 7" style="stroke:#a8abb1"/>
<path class="ln" d="M124 74.500A7.800 7.800 0 1 0 125.500 80M124.500 68.500v6.500h-6.500"/>
<rect x="150" y="58" width="1237" height="42" rx="21" fill="#e6eaf3"/>
<circle cx="171" cy="78.500" r="15" fill="#f8faff"/>
<circle cx="166.500" cy="73" r="2.300" fill="none" stroke="#333" stroke-width="1.500"/><path d="M171 73h6M164 84h6" stroke="#333" stroke-width="1.500"/><circle cx="175" cy="84" r="2.300" fill="none" stroke="#333" stroke-width="1.500"/>
<text x="196" y="85.800" font-size="18" fill="#1f1f1f" textLength="159" lengthAdjust="spacingAndGlyphs">sourcesight.belum.ai</text>
<text x="355" y="85.800" font-size="18" fill="#50555c" textLength="66" lengthAdjust="spacingAndGlyphs">/settings</text>
<path class="ln" d="M1358 69.500l2.700 5.700 6.300.8-4.600 4.300 1.200 6.200-5.600-3.100-5.600 3.100 1.200-6.200-4.600-4.300 6.300-.8z"/>

<rect x="1411.500" y="70.500" width="19" height="18" rx="4" fill="none" stroke="#1a73e8" stroke-width="3"/>
<rect x="1420.500" y="80" width="18.500" height="17" rx="4" fill="#20536b"/>
<text x="1426" y="93.500" font-size="13" font-weight="700" fill="#fff">7</text>
<use href="#disc" x="1454" y="68" width="22" height="20"/>
<path class="ln" d="M1504 72.500h4v-2a2.200 2.200 0 0 1 4.400 0v2h4.600a1.500 1.500 0 0 1 1.500 1.500v13a1.500 1.500 0 0 1-1.500 1.500h-13a1.500 1.500 0 0 1-1.500-1.500v-3.500h1a2.500 2.500 0 0 0 0-5h-1V74a1.500 1.500 0 0 1 1.500-1.500z"/>
<rect x="1543" y="70" width="1.500" height="19" fill="#c6d8f5"/>
<path class="ln" d="M1578 88h-9a2.500 2.500 0 0 1-2.500-2.500v-11a2.500 2.500 0 0 1 2.500-2.500h15a2.500 2.500 0 0 1 2.500 2.500v3M1571.500 72v16"/>
<circle cx="1581" cy="82" r="4" fill="none" stroke="#444a52" stroke-width="1.700"/><path class="ln" d="M1584 85l4 4"/>
<rect x="1610.500" y="70" width="1.500" height="19" fill="#c6d8f5"/>
<path class="ln" d="M1645 69v14M1638.500 77l6.500 6.500 6.500-6.500M1636 84v4.500h18V84"/>
<rect x="1673" y="57" width="94" height="42" rx="21" fill="#d3e3fd"/>
<circle cx="1698" cy="78" r="13" fill="#b9c4a4"/><path d="M1688 89c1-6 5-7 10-7s9 1 10 7a13 13 0 0 1-20 0z" fill="#1d2a48"/><ellipse cx="1698" cy="74" rx="5" ry="6.500" fill="#b98a68"/><path d="M1692.500 73c0-5 2.500-7 5.500-7s5.500 2 5.500 7c-2-3-9-3-11 0z" fill="#2a211c"/><path d="M1693 77c1 5 9 5 10 0l-.5 4c-2 2.500-7 2.500-9 0z" fill="#2a211c"/>
<text class="ui" x="1718" y="84" textLength="35" lengthAdjust="spacingAndGlyphs">Work</text>
<rect x="1774" y="57" width="137" height="42" rx="21" fill="#d3e3fd"/>
<text class="ui" x="1789" y="84" textLength="87.500" lengthAdjust="spacingAndGlyphs">Finish update</text>
<circle cx="1892.600" cy="70.800" r="2" fill="#222"/><circle cx="1892.600" cy="78.300" r="2" fill="#222"/><circle cx="1892.600" cy="85.800" r="2" fill="#222"/>

<!-- bookmarks bar -->
<g fill="none" stroke="#555" stroke-width="1.700">
<rect x="16" y="117.500" width="6.500" height="6.500" rx=".8"/><rect x="26.500" y="117.500" width="6.500" height="6.500" rx=".8"/>
<rect x="16" y="127.500" width="6.500" height="6.500" rx=".8"/><rect x="26.500" y="127.500" width="6.500" height="6.500" rx=".8"/>
</g>
<rect x="1755.500" y="115" width="1.500" height="20" fill="#c6d8f5"/>
<path class="ln" d="M1779 119h6l2 2.200h9.500v10.800a1 1 0 0 1-1 1h-16a1 1 0 0 1-1-1v-12.500z" style="stroke:#555"/>
<text x="1807.500" y="129.500" font-size="14" fill="#4a4f57" textLength="94.500" lengthAdjust="spacingAndGlyphs">All Bookmarks</text>
</svg>
</body>
</html>
